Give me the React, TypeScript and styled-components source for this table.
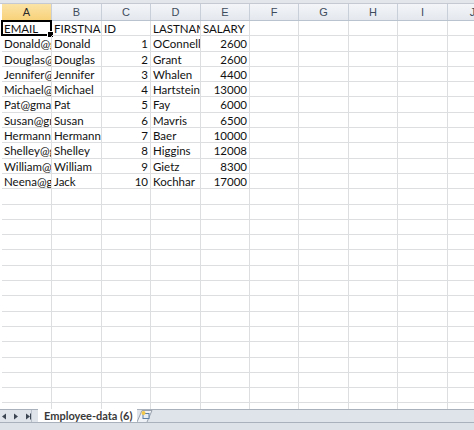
import React from "react";
import styled, { createGlobalStyle } from "styled-components";

const Global = createGlobalStyle`
  html, body { margin: 0; padding: 0; background: #fff; }
  body { width: 474px; height: 430px; overflow: hidden; font-family: Lato, "Open Sans", "Liberation Sans", sans-serif; }
`;

const COLS = [50, 50, 49, 50, 49, 49, 50, 49, 50, 50];
const LETTERS = ["A", "B", "C", "D", "E", "F", "G", "H", "I", "J"];

const data: (string | number)[][] = [
  ["EMAIL", "FIRSTNAME", "ID", "LASTNAME", "SALARY"],
  ["Donald@gmail", "Donald", 1, "OConnell", 2600],
  ["Douglas@gmail", "Douglas", 2, "Grant", 2600],
  ["Jennifer@gmail", "Jennifer", 3, "Whalen", 4400],
  ["Michael@gmail", "Michael", 4, "Hartstein", 13000],
  ["Pat@gmail", "Pat", 5, "Fay", 6000],
  ["Susan@gmail", "Susan", 6, "Mavris", 6500],
  ["Hermann@gmail", "Hermann", 7, "Baer", 10000],
  ["Shelley@gmail", "Shelley", 8, "Higgins", 12008],
  ["William@gmail", "William", 9, "Gietz", 8300],
  ["Neena@gmail", "Jack", 10, "Kochhar", 17000],
];

const Frame = styled.div`
  width: 474px;
  height: 430px;
  display: flex;
  flex-direction: column;
  overflow: hidden;
  background: #fff;
`;

const TopStrip = styled.div`
  height: 3px;
  background: #e3e6ea;
  border-bottom: 1px solid #c5cad2;
  flex: none;
`;

const Sheet = styled.div`
  flex: 1;
  overflow: hidden;
  padding-left: 2px;
`;

const HeaderRow = styled.div`
  display: flex;
  height: 16px;
  border-bottom: 1px solid #b9c3cf;
  background: linear-gradient(#f3f5f8, #e4e8ee);
`;

const ColHead = styled.div<{ $w: number; $sel?: boolean }>`
  flex: none;
  width: ${(p) => p.$w}px;
  box-sizing: border-box;
  border-right: 1px solid #c8cfd8;
  text-align: center;
  font-size: 11px;
  line-height: 17px;
  color: ${(p) => (p.$sel ? "#2b2b2b" : "#3e4b5c")};
  background: ${(p) => (p.$sel ? "linear-gradient(#fbe3a6, #f8d27a)" : "transparent")};
  font-family: "Liberation Sans", Arial, sans-serif;
`;

const Row = styled.div`
  display: flex;
  height: 15.3px;
`;

const Cell = styled.div<{ $w: number; $num?: boolean; $sel?: boolean }>`
  position: relative;
  flex: none;
  width: ${(p) => p.$w}px;
  box-sizing: border-box;
  border-right: 1px solid #dcdedf;
  border-bottom: 1px solid #dcdedf;
  font-size: 11.5px;
  line-height: 16px;
  color: #111;
  padding: 0 2px;
  white-space: nowrap;
  overflow: ${(p) => (p.$sel ? "visible" : "hidden")};
  text-align: ${(p) => (p.$num ? "right" : "left")};
`;

const SelBox = styled.div`
  position: absolute;
  left: -1px;
  top: -1px;
  right: -1px;
  bottom: -1px;
  border: 2px solid #000;
  pointer-events: none;
  &::after {
    content: "";
    position: absolute;
    right: -4px;
    bottom: -4px;
    width: 5px;
    height: 5px;
    background: #000;
    border: 1px solid #fff;
  }
`;

const TabBar = styled.div`
  flex: none;
  height: 12px;
  display: flex;
  align-items: flex-end;
  background: #dfe3ea;
  border-top: 1px solid #a9b1bc;
  border-bottom: 1px solid #a9b1bc;
`;

const NavArrows = styled.div`
  display: flex;
  align-items: center;
  gap: 6px;
  width: 32px;
  height: 12px;
  padding-left: 1px;
  border-right: 1px solid #b8bfc9;
  box-sizing: border-box;
`;

const Tab = styled.div`
  position: relative;
  height: 13px;
  margin-left: 6px;
  margin-top: -1px;
  padding: 0 4px 0 6px;
  background: #fff;
  font-size: 11px;
  font-weight: 700;
  line-height: 13px;
  color: #3a3a3a;
  align-self: flex-start;
`;

const NewTab = styled.div`
  width: 22px;
  height: 12px;
  display: flex;
  align-items: center;
`;

const StatusBar = styled.div`
  flex: none;
  height: 7px;
  background: #dde2e9;
`;

function Arrow({ dir, bar }: { dir: "l" | "r"; bar?: boolean }) {
  return (
    <svg width="6" height="7" viewBox="0 0 6 7">
      {dir === "l" ? <polygon points="5,0.5 5,6.5 1,3.5" fill="#3c4652" /> : <polygon points="1,0.5 1,6.5 5,3.5" fill="#3c4652" />}
      {bar && <rect x={dir === "l" ? 0 : 5} y="0.5" width="1" height="6" fill="#3c4652" />}
    </svg>
  );
}

export default function App() {
  const rows = [];
  for (let r = 0; r < 27; r++) {
    const d = data[r];
    rows.push(
      <Row key={r}>
        {COLS.map((w, c) => {
          const v = d ? d[c] : undefined;
          const num = typeof v === "number";
          const sel = r === 0 && c === 0;
          return (
            <Cell key={c} $w={w} $num={num} $sel={sel}>
              {v !== undefined ? String(v) : ""}
              {sel && <SelBox />}
            </Cell>
          );
        })}
      </Row>
    );
  }
  return (
    <Frame>
      <Global />
      <TopStrip />
      <Sheet>
        <HeaderRow>
          {COLS.map((w, c) => (
            <ColHead key={c} $w={w} $sel={c === 0}>
              {LETTERS[c]}
            </ColHead>
          ))}
        </HeaderRow>
        {rows}
      </Sheet>
      <TabBar>
        <NavArrows>
          <Arrow dir="l" />
          <Arrow dir="r" />
          <Arrow dir="r" bar />
        </NavArrows>
        <Tab>Employee-data (6)</Tab>
        <NewTab>
          <svg width="22" height="12" viewBox="0 0 22 12">
            <path d="M0 12 L5 0.5 L15 0.5 L10 12" fill="#eef1f5" stroke="#9aa3ae" strokeWidth="1" />
            <rect x="6" y="3.5" width="6" height="5" fill="#e6edf5" stroke="#5c7fa6" strokeWidth="1" />
            <circle cx="6.5" cy="3" r="2" fill="#f2c84b" />
          </svg>
        </NewTab>
      </TabBar>
      <StatusBar />
    </Frame>
  );
}
